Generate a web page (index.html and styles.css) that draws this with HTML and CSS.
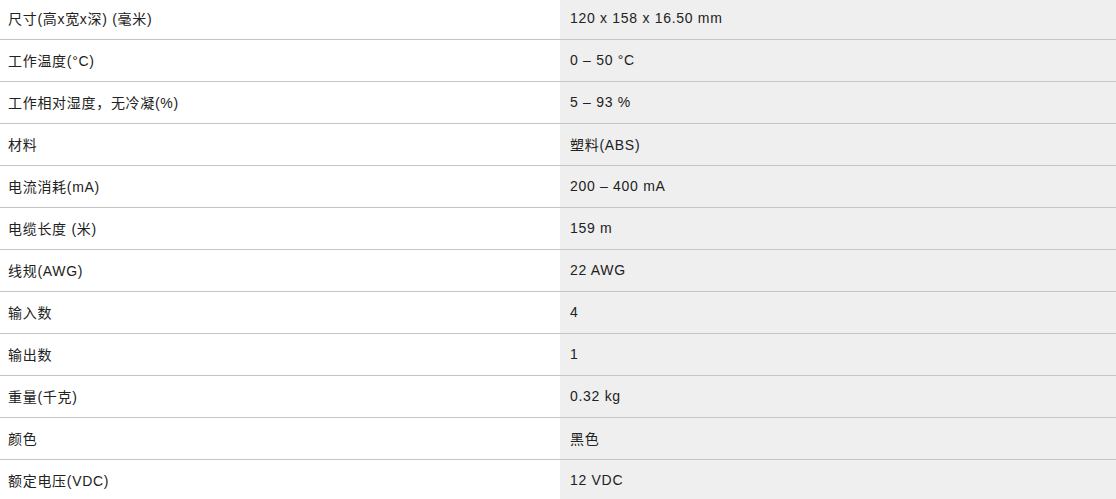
FILE: index.html
```html
<!DOCTYPE html>
<html lang="zh">
<head>
<meta charset="utf-8">
<link rel="stylesheet" href="styles.css">
</head>
<body>
<div class="specs">
  <div class="row"><div class="k">尺寸(高x宽x深) (毫米)</div><div class="v">120 x 158 x 16.50 mm</div></div>
  <div class="row"><div class="k">工作温度(°C)</div><div class="v">0 – 50 °C</div></div>
  <div class="row"><div class="k">工作相对湿度，无冷凝(%)</div><div class="v">5 – 93 %</div></div>
  <div class="row"><div class="k">材料</div><div class="v">塑料(ABS)</div></div>
  <div class="row"><div class="k">电流消耗(mA)</div><div class="v">200 – 400 mA</div></div>
  <div class="row"><div class="k">电缆长度 (米)</div><div class="v">159 m</div></div>
  <div class="row"><div class="k">线规(AWG)</div><div class="v">22 AWG</div></div>
  <div class="row"><div class="k">输入数</div><div class="v">4</div></div>
  <div class="row"><div class="k">输出数</div><div class="v">1</div></div>
  <div class="row"><div class="k">重量(千克)</div><div class="v">0.32 kg</div></div>
  <div class="row"><div class="k">颜色</div><div class="v">黑色</div></div>
  <div class="row"><div class="k">额定电压(VDC)</div><div class="v">12 VDC</div></div>
</div>
</body>
</html>
```
FILE: styles.css
```css
html, body {
  margin: 0;
  padding: 0;
  background: #fff;
}
body {
  font-family: "Liberation Sans", Arial, "Noto Sans CJK SC", sans-serif;
  font-size: 14px;
  letter-spacing: 0.7px;
  color: #222;
  overflow: hidden;
}
.specs {
  margin-top: -2px;
}
.row {
  display: grid;
  grid-template-columns: 560px 1fr;
  border-bottom: 1px solid #c4c4c4;
  height: 41px;
}
.k, .v {
  display: flex;
  align-items: center;
  padding-bottom: 2px;
  box-sizing: border-box;
}
.k {
  padding-left: 8px;
}
.v {
  padding-left: 10px;
  background: #efefef;
}
```
